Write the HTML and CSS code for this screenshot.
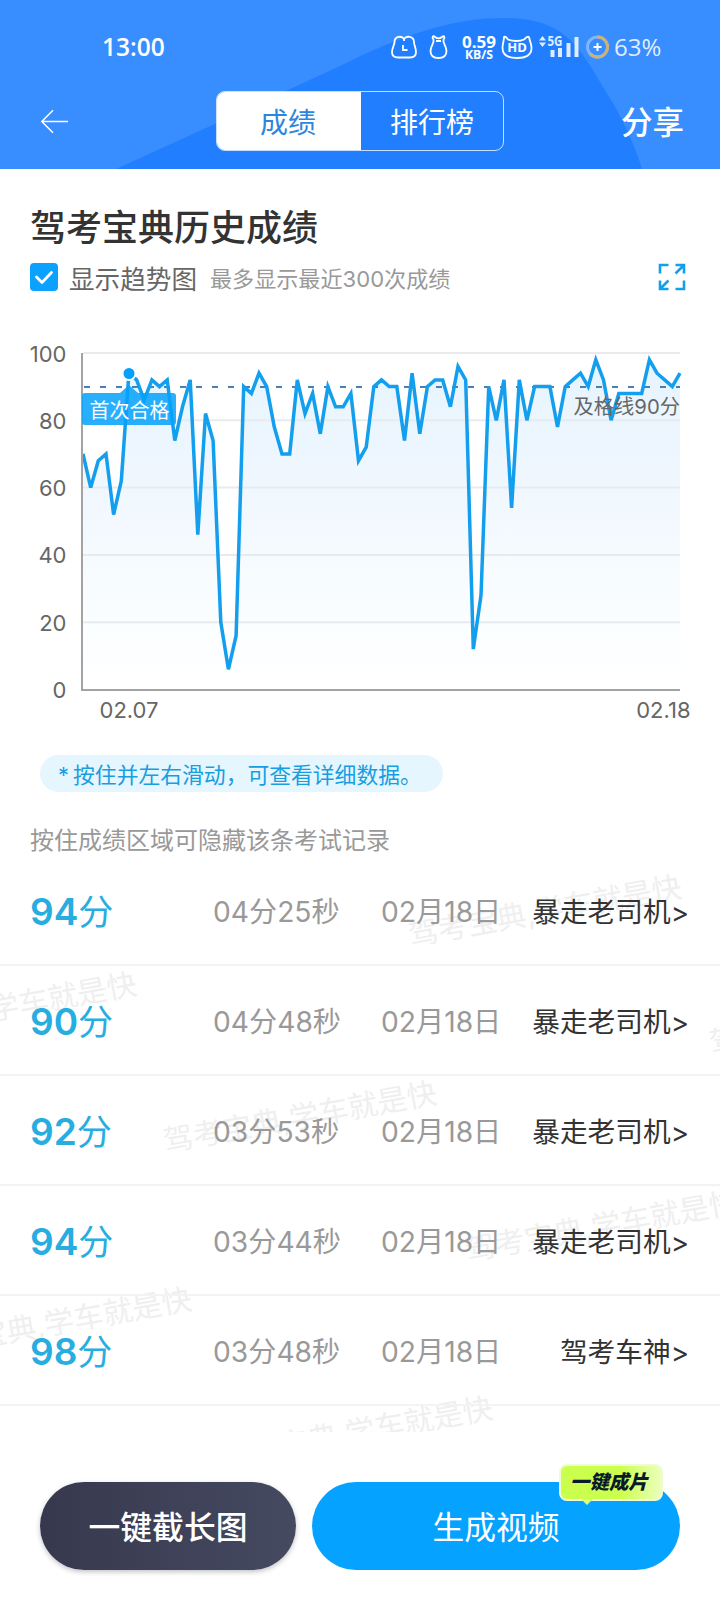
FILE: index.html
```html
<!DOCTYPE html>
<html lang="zh-CN">
<head>
    <meta charset="UTF-8">
    <meta name="viewport" content="width=device-width, initial-scale=1.0">
    <title>历史成绩</title>
    <link rel="stylesheet" href="styles.css">
</head>
<body>
    <header class="header">
        <svg class="header-bg" viewBox="0 0 720 169">
            <path d="M116 169 L206 128 L340 66 C400 36 452 18 503 18 C570 18 580 50 613 103 C628 130 637 152 642 169 Z" fill="#217fff"/>
        </svg>
        <div class="status">
            <span class="clock">13:00</span>
            <svg class="status-icons" width="222" height="34" viewBox="0 0 222 34" fill="none" stroke="#fff" stroke-width="1.8">
                <path d="M14 9 C12 5.500 4.500 6 4.500 12 C4.500 15 2 18 2 22 C2 26 5 27.500 8 27.500 H20 C24 27.500 26 25 26 22 C26 18 24 15 24 12 C24 6 16 5.500 14 9 Z M14 9 V11" stroke-linejoin="round"/>
                <path d="M13 15 V20 H17.500"/>
                <path d="M45 7 C43 5 41.500 7.500 43.500 9.500 C44.500 13 40.500 16 40.500 21 C40.500 25.500 43 28 48.500 28 C54 28 56.500 25.500 56.500 21 C56.500 16 52.500 13 53.500 9.500 C55.500 7.500 54 5 52 7 C50 8.500 47 8.500 45 7 Z M46 11 H51"/>
                <path d="M114 7 Q115 5.500 118 9.500 C123 11.500 130 11.500 134 9.500 C138 5.500 139 6 139.500 9 C140 12 141.500 14 141.500 18 C141.500 25 136 28 127 28 C118 28 112.500 25 112.500 18 C112.500 14 114 11 114 7 Z"/>
                <g fill="#fff" stroke="none">
                    <text class="net" x="72" y="17.500" textLength="34" lengthAdjust="spacingAndGlyphs">0.59</text>
                    <text class="net-unit" x="75" y="29" textLength="28" lengthAdjust="spacingAndGlyphs">KB/S</text>
                    <text class="hd" x="127" y="22" text-anchor="middle">HD</text>
                    <path d="M149 10.500 L152.500 6 L156 10.500 Z M149 12.500 L152.500 17 L156 12.500 Z" opacity=".85"/>
                    <text class="net-5g" x="157.500" y="16" textLength="15" lengthAdjust="spacingAndGlyphs">5G</text>
                    <path opacity=".85" d="M160.500 20 h4 v7 h-4 Z M168 18 h4 v9 h-4 Z M176.500 13 h4 v14 h-4 Z M184.500 7 h4 v20 h-4 Z"/>
                </g>
                <circle cx="207.500" cy="17" r="10" stroke="#80b5ff" stroke-width="3"/>
                <path d="M207.500 7 A10 10 0 1 1 200.200 23.800" stroke="#cfb273" stroke-width="3"/>
                <path d="M203.500 17 h8 M207.500 13 v8" stroke-width="2"/>
            </svg>
            <span class="battery">63%</span>
        </div>
        <nav class="nav">
            <svg class="back" width="30" height="26" viewBox="0 0 30 26" fill="none" stroke="#fff" stroke-width="1.5">
                <path d="M29 13.500 H3 M14 2.300 L2.800 13.500 L14 24.700"/>
            </svg>
            <div class="tabs">
                <span class="tab active">成绩</span>
                <span class="tab">排行榜</span>
            </div>
            <span class="share">分享</span>
        </nav>
    </header>

    <section class="summary">
        <h1>驾考宝典历史成绩</h1>
        <div class="options">
            <span class="checkbox">
                <svg width="28" height="28" viewBox="0 0 28 28" fill="none" stroke="#fff" stroke-width="2.800" stroke-linecap="round" stroke-linejoin="round">
                    <path d="M6.500 14 L12 19.500 L21.500 9.500"/>
                </svg>
            </span>
            <span class="option-name">显示趋势图</span>
            <span class="option-tip">最多显示最近300次成绩</span>
            <svg class="expand" width="28" height="28" viewBox="0 0 28 28" fill="none" stroke="#149fee" stroke-width="2.600">
                <path d="M2 10.500 V2 H10.500 M17.500 2 H26 V10.500 M26 2 L17.500 10.500 M2 17.500 V26 H10.500 M2 26 L10.500 17.500 M17.500 26 H26 V17.500"/>
            </svg>
        </div>
    </section>

    <svg class="chart" width="720" height="410" viewBox="0 320 720 410">
        <defs>
            <linearGradient id="areaFill" x1="0" y1="353" x2="0" y2="690" gradientUnits="userSpaceOnUse">
                <stop offset="0" stop-color="#e6f4fe"/>
                <stop offset=".4" stop-color="#f0f7fe"/>
                <stop offset=".8" stop-color="#fbfeff"/>
                <stop offset="1" stop-color="#ffffff"/>
            </linearGradient>
        </defs>
        <path id="area" fill="url(#areaFill)"/>
        <g id="grid"></g>
        <path d="M84 387 H680" class="pass-line"/>
        <path id="line" class="line"/>
        <path d="M82 353 V690 H680" class="axis"/>
        <circle cx="129" cy="373.500" r="6.500" class="dot"/>
        <path class="tag" d="M85 393 H120 L129 385 L138 393 H173 Q176 393 176 396 V422 Q176 425 173 425 H85 Q82 425 82 422 V396 Q82 393 85 393 Z"/>
        <text x="129.500" y="418" text-anchor="middle" class="tag-text">首次合格</text>
        <text x="680" y="413.500" text-anchor="end" class="pass-text">及格线90分</text>
        <text x="129" y="718" text-anchor="middle" class="axis-text">02.07</text>
        <text x="690.500" y="718" text-anchor="end" class="axis-text">02.18</text>
    </svg>

    <p class="pill">* 按住并左右滑动，可查看详细数据。</p>
    <p class="hint">按住成绩区域可隐藏该条考试记录</p>

    <main class="list">
        <svg class="watermark" width="720" height="577" viewBox="0 855 720 577" id="watermark"></svg>
        <div class="row">
            <span class="score"><b>94</b>分</span>
            <span class="time">04分25秒</span>
            <span class="date">02月18日</span>
            <span class="rank">暴走老司机&gt;</span>
        </div>
        <div class="row">
            <span class="score"><b>90</b>分</span>
            <span class="time">04分48秒</span>
            <span class="date">02月18日</span>
            <span class="rank">暴走老司机&gt;</span>
        </div>
        <div class="row">
            <span class="score"><b>92</b>分</span>
            <span class="time">03分53秒</span>
            <span class="date">02月18日</span>
            <span class="rank">暴走老司机&gt;</span>
        </div>
        <div class="row">
            <span class="score"><b>94</b>分</span>
            <span class="time">03分44秒</span>
            <span class="date">02月18日</span>
            <span class="rank">暴走老司机&gt;</span>
        </div>
        <div class="row">
            <span class="score"><b>98</b>分</span>
            <span class="time">03分48秒</span>
            <span class="date">02月18日</span>
            <span class="rank">驾考车神&gt;</span>
        </div>
    </main>

    <footer class="footer">
        <div class="btn btn-dark">一键截长图</div>
        <div class="btn btn-blue">
            生成视频
            <span class="badge">一键成片</span>
        </div>
    </footer>

    <script>
        const scores = [
            70, 60, 68, 70, 52, 62, 94, 92, 86, 92, 90, 92, 74, 84, 92, 46, 82, 74, 20, 6,
            16, 90, 88, 94, 90, 78, 70, 70, 92, 82, 88, 76, 90, 84, 84, 88, 68, 72, 90, 92,
            90, 90, 74, 94, 76, 90, 92, 92, 84, 96, 92, 12, 28, 90, 80, 92, 54, 92, 80, 90,
            90, 90, 78, 90, 92, 94, 90, 98, 92, 80, 88, 88, 88, 88, 98, 94, 92, 90, 94
        ];
        const left = 83, right = 680, bottom = 689.5, unit = 3.365;
        const points = scores.map((s, i) => {
            const x = left + i * (right - left) / (scores.length - 1);
            return x.toFixed(1) + " " + (bottom - s * unit).toFixed(1);
        });
        const path = "M" + points.join(" L");
        document.getElementById("line").setAttribute("d", path);
        document.getElementById("area").setAttribute("d", path + ` L${right} ${bottom} L${left} ${bottom} Z`);

        let grid = "";
        for (let v = 0; v <= 100; v += 20) {
            const y = bottom - v * unit;
            if (v > 0) grid += `<path d="M83 ${y} H680" class="grid-line"/>`;
            grid += `<text x="66.500" y="${y + 8.5}" text-anchor="end" class="axis-text">${v}</text>`;
        }
        document.getElementById("grid").innerHTML = grid;

        const marks = [[683, 897], [984, 1005], [138, 994], [438, 1103], [740, 1212], [193, 1309], [494, 1418]];
        document.getElementById("watermark").innerHTML = marks.map(([x, y]) =>
            `<text x="${x}" y="${y}" text-anchor="end" transform="rotate(-10.2 ${x} ${y})">驾考宝典,学车就是快</text>`
        ).join("");
    </script>
</body>
</html>
```
FILE: styles.css
```css
* {
    box-sizing: border-box;
}
body {
    margin: 0;
    width: 720px;
    height: 1600px;
    overflow: hidden;
    background-color: #fff;
    font-family: Inter, "Noto Sans CJK SC", sans-serif;
}
.header {
    position: relative;
    height: 169px;
    padding-top: 30px;
    background-color: #388dff;
    color: #fff;
}
.header-bg {
    position: absolute;
    top: 0;
    left: 0;
    width: 720px;
    height: 169px;
}
.status {
    position: relative;
    display: flex;
    align-items: center;
    height: 34px;
    padding-left: 102px;
}
.clock {
    width: 288px;
    font: 600 24.5px/34px "Open Sans", sans-serif;
}
.battery {
    margin-left: 2px;
    font: 500 24px/36px "Open Sans", sans-serif;
    opacity: 0.85;
}
.net, .net-unit, .hd, .net-5g {
    font-family: "Open Sans", sans-serif;
    font-weight: 700;
}
.net {
    font-size: 16px;
}
.net-unit {
    font-size: 12.5px;
}
.hd {
    font-size: 13px;
}
.net-5g {
    font-size: 14px;
    opacity: 0.85;
}
.nav {
    position: relative;
    display: flex;
    align-items: center;
    height: 60px;
    margin-top: 27px;
    padding: 0 36px 0 39px;
}
.tabs {
    display: flex;
    width: 288px;
    height: 60px;
    margin-left: 147px;
    border: 1.5px solid rgba(255, 255, 255, 0.75);
    border-radius: 9px;
    overflow: hidden;
}
.tab {
    flex: 1;
    font-size: 28px;
    line-height: 62px;
    text-align: center;
}
.tab.active {
    flex: 0 0 144px;
    padding-right: 2px;
    background-color: #fff;
    color: #2b86dd;
}
.share {
    margin-left: auto;
    padding-top: 4px;
    font-size: 31.5px;
    font-weight: 500;
    line-height: 58px;
}
.summary {
    padding: 35px 34px 0 30px;
}
h1 {
    margin: 0;
    font-size: 36px;
    font-weight: 500;
    line-height: 48px;
    color: #333;
}
.options {
    display: flex;
    align-items: center;
    height: 50px;
}
.checkbox {
    width: 28px;
    height: 28px;
    border-radius: 4px;
    background-color: #0aa1ff;
}
.option-name {
    margin-left: 11px;
    font-size: 25.6px;
    color: #666;
}
.option-tip {
    margin-left: 13px;
    font-size: 22.1px;
    color: #999;
}
.expand {
    margin-left: auto;
}
.chart {
    display: block;
    margin-top: 18px;
}
.grid-line {
    stroke: #e8ebee;
    stroke-width: 2;
}
.pass-line {
    stroke: #4580b8;
    stroke-width: 2;
    stroke-dasharray: 6 10;
    fill: none;
}
.line {
    stroke: #149fee;
    stroke-width: 3.5;
    fill: none;
}
.axis {
    stroke: #a3a3a3;
    stroke-width: 2;
    fill: none;
}
.dot {
    fill: #03a1fb;
    stroke: #fff;
    stroke-width: 2;
}
.tag {
    fill: #03a1fb;
    opacity: 0.85;
}
.tag-text {
    font-size: 20px;
    fill: #fff;
}
.pass-text {
    font-size: 20.3px;
    fill: #666;
}
.axis-text {
    font-size: 22px;
    fill: #666;
}
.pill {
    width: 403px;
    height: 37px;
    margin: 25px 0 0 40px;
    padding-left: 18px;
    border-radius: 19px;
    background-color: #e5f6ff;
    font-size: 21.8px;
    line-height: 40px;
    white-space: nowrap;
    word-spacing: -2px;
    color: #179ee0;
}
.hint {
    margin: 30px 0 0 30px;
    height: 33px;
    font-size: 24px;
    line-height: 38px;
    color: #999;
}
.list {
    position: relative;
    height: 577px;
}
.watermark {
    position: absolute;
    top: 0;
    left: 0;
    font-size: 29.8px;
    fill: #efefef;
}
.row {
    position: relative;
    display: grid;
    grid-template-columns: 183px 160px 1fr auto;
    align-items: center;
    height: 110px;
    padding: 4px 31px 0 30px;
    border-bottom: 2px solid #f3f3f3;
    line-height: 44px;
}
.row:first-of-type {
    height: 111px;
}
.score {
    font-size: 35px;
    color: #27addf;
}
.score b {
    font-size: 37px;
    font-weight: 600;
}
.time, .date {
    font-size: 28.2px;
    color: #999;
}
.date {
    padding-left: 8px;
}
.rank {
    font-size: 27.7px;
    color: #333;
}
.footer {
    display: flex;
    gap: 16px;
    padding: 50px 40px 0;
}
.btn {
    position: relative;
    height: 88px;
    border-radius: 44px;
    font-size: 31.8px;
    line-height: 91px;
    text-align: center;
    color: #fff;
}
.btn-dark {
    width: 256px;
    background: linear-gradient(90deg, #37384e, #454a60);
    box-shadow: 0 2px 5px rgba(55, 56, 78, 0.3);
    font-weight: 500;
}
.btn-blue {
    width: 368px;
    background-color: #05a3ff;
}
.badge {
    position: absolute;
    top: -18px;
    right: 17px;
    width: 104px;
    height: 37px;
    padding-right: 4px;
    border: 2px solid #effbd5;
    border-radius: 8px;
    background: linear-gradient(90deg, #cbff4d 60%, #ecffbd);
    font-size: 19.5px;
    font-style: italic;
    font-weight: 900;
    line-height: 33px;
    color: #0a1a2a;
}
.badge::after {
    content: "";
    position: absolute;
    left: 20px;
    top: 33px;
    border: 6px solid transparent;
    border-top-color: #d8ff7d;
    border-bottom: 0;
}
```
